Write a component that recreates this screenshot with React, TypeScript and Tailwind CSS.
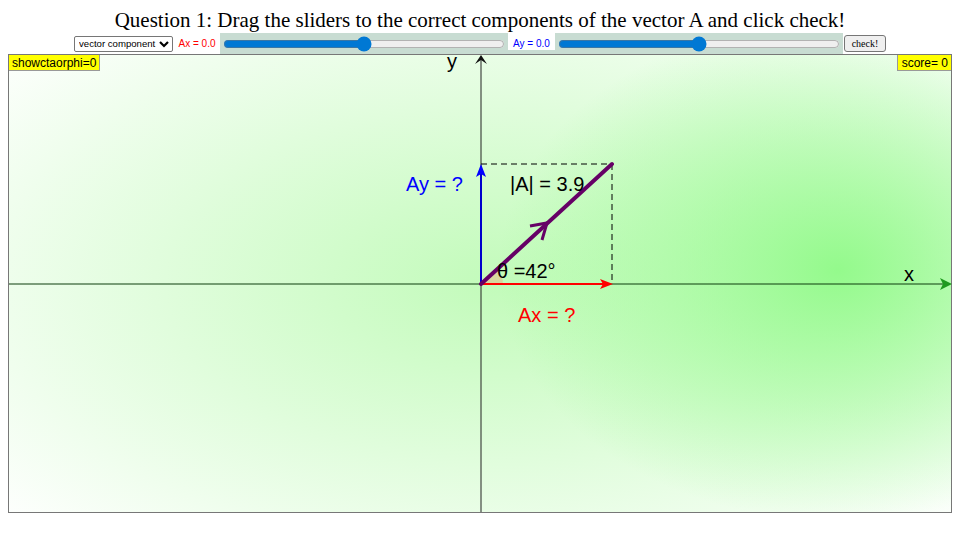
import { useState } from "react";

const sans = { fontFamily: '"Liberation Sans", Arial, sans-serif' };

const Slider = ({ value, onChange }: { value: number; onChange: (v: number) => void }) => (
  <div className="flex h-[21px] w-[288px] items-center justify-center bg-[#c8dcd2]">
    <input
      type="range"
      min={0}
      max={100}
      value={value}
      onChange={(e) => onChange(Number(e.target.value))}
      className="m-0 h-[16px] w-[282px] accent-[#0078d4]"
    />
  </div>
);

const VectorCanvas = () => {
  const ang = (42 * Math.PI) / 180;
  const wx = 481 + 22 * Math.cos(ang);
  const wy = 284 - 22 * Math.sin(ang);

  return (
    <div
      className="relative ml-[8px] h-[459px] w-[944px] border border-[#777]"
      style={{
        background:
          "radial-gradient(ellipse 36% 55% at 88% 47%, rgba(148,250,140,1) 0%, rgba(148,250,140,0) 100%), radial-gradient(ellipse 72% 78% at 52% 50%, #c2fbba 0%, #ffffff 100%)",
      }}
    >
      <svg
        className="absolute left-0 top-0"
        width={942}
        height={457}
        viewBox="9 55 942 457"
        overflow="visible"
        style={sans}
      >
        {/* axes */}
        <line x1={9} y1={284} x2={946} y2={284} stroke="#0d3d0d" strokeWidth={1} />
        <polygon points="952,284 940,278 943,284 940,290" fill="#1f9a1f" />
        <line x1={481} y1={60} x2={481} y2={512} stroke="#222" strokeWidth={1} />
        <polygon points="481,55 475,64 481,60 487,64" fill="#111" />
        <text x={904} y={281} fontSize={20} fill="#000">x</text>
        <text x={447} y={68} fontSize={20} fill="#000">y</text>

        {/* angle wedge */}
        <path
          d={`M481,284 L503,284 A22,22 0 0 0 ${wx},${wy} Z`}
          fill="rgba(255,150,110,0.35)"
        />

        {/* dashed projections */}
        <line x1={481} y1={164} x2={612} y2={164} stroke="#000" strokeWidth={1} strokeDasharray="6 4" />
        <line x1={612} y1={164} x2={612} y2={284} stroke="#000" strokeWidth={1} strokeDasharray="6 4" />

        {/* component arrows */}
        <line x1={481} y1={284} x2={481} y2={172} stroke="#0000cc" strokeWidth={2} />
        <polygon points="481,164 476,177 481,174 486,177" fill="#0000ff" />
        <line x1={481} y1={284} x2={604} y2={284} stroke="#ff0000" strokeWidth={2} />
        <polygon points="613,284 600,279 603,284 600,289" fill="#ff0000" />

        {/* vector A */}
        <line x1={481} y1={284} x2={612} y2={164} stroke="#660066" strokeWidth={4} strokeLinecap="round" />
        <polyline
          points="530,226 547,223 542,240"
          fill="none"
          stroke="#660066"
          strokeWidth={3}
          strokeLinejoin="miter"
        />

        {/* labels */}
        <text x={406} y={191} fontSize={20} fill="#0000ff">Ay = ?</text>
        <text x={510} y={191} fontSize={20} fill="#000">|A| = 3.9</text>
        <text x={497} y={278} fontSize={20} fill="#000">θ =42°</text>
        <text x={518} y={322} fontSize={20} fill="#ff0000">Ax = ?</text>
      </svg>

      <div
        className="absolute left-0 top-0 h-[16px] border-r border-b border-[#999] bg-[#ffff00] pl-[3px] pr-[3px] text-[12px] leading-[16px] text-black"
        style={sans}
      >
        showctaorphi=0
      </div>
      <div
        className="absolute right-0 top-0 h-[16px] border-l border-b border-[#999] bg-[#ffff00] pl-[4px] pr-[3px] text-[12px] leading-[16px] text-black"
        style={sans}
      >
        score= 0
      </div>
    </div>
  );
};

export default function App() {
  const [ax, setAx] = useState<number>(50);
  const [ay, setAy] = useState<number>(50);

  return (
    <div className="h-[540px] w-[960px] bg-white">
      <div
        className="h-[33px] pt-[7px] text-center text-[21px] leading-[26px] text-black"
        style={{ fontFamily: '"Liberation Serif", "DejaVu Serif", serif' }}
      >
        Question 1: Drag the sliders to the correct components of the vector A and click check!
      </div>

      <div className="flex h-[21px] items-center justify-center" style={sans}>
        <div className="relative h-[16px] w-[99px]">
          <select
            className="block h-[16px] w-[99px] appearance-none rounded-[2px] border border-[#767676] bg-white py-0 pl-[4px] pr-0 text-[9.6px] leading-[14px] text-black"
            defaultValue="vector component"
          >
            <option>vector component</option>
            <option>polar form</option>
          </select>
          <svg
            className="pointer-events-none absolute right-[4px] top-[5px]"
            width={10}
            height={7}
            viewBox="0 0 10 7"
          >
            <polyline points="1,1 5,5 9,1" fill="none" stroke="#000" strokeWidth={2.2} />
          </svg>
        </div>
        <div className="ml-[1px] flex h-[21px] w-[46px] items-center justify-center bg-white text-[10px] text-[#ff0000]">
          Ax = 0.0
        </div>
        <Slider value={ax} onChange={setAx} />
        <div className="flex h-[21px] w-[47px] flex-col bg-[#c8dcd2]">
          <div className="flex h-[17px] items-end justify-center bg-white text-[10px] leading-[12px] text-[#0000ff]">
            Ay = 0.0
          </div>
        </div>
        <Slider value={ay} onChange={setAy} />
        <button
          className="ml-[1px] h-[17px] w-[42px] rounded-[3px] border border-[#767676] bg-[#efefef] text-[10px] leading-[14px] text-black"
          style={{ fontFamily: '"Liberation Serif", serif' }}
        >
          check!
        </button>
      </div>

      <VectorCanvas />
    </div>
  );
}
